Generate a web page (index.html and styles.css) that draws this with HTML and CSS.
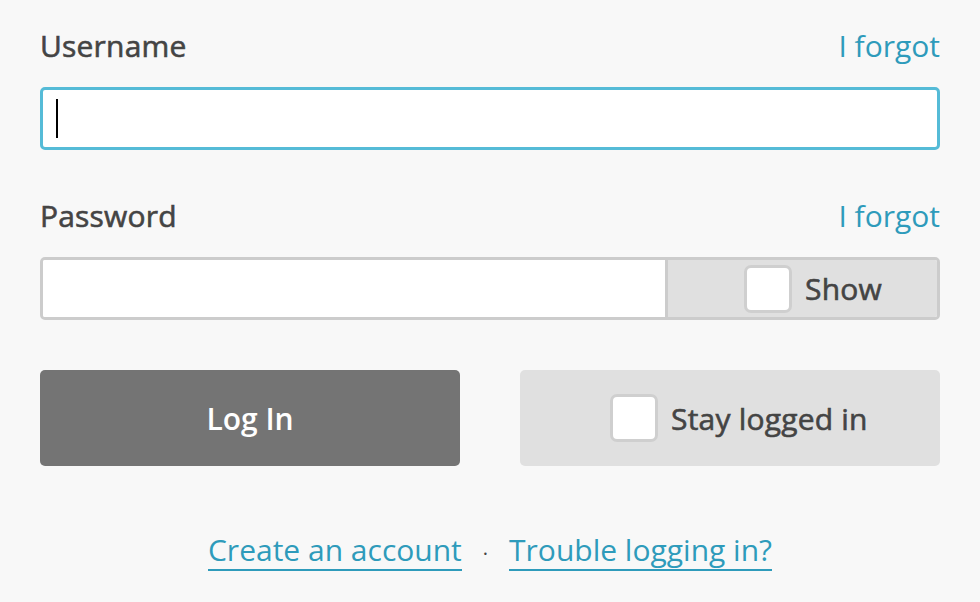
FILE: index.html
```html
<!DOCTYPE html>
<html lang="en">
<head>
<meta charset="utf-8">
<title>Log In</title>
<link rel="stylesheet" href="styles.css">
</head>
<body>
<form class="login">
  <div class="field">
    <div class="label-row">
      <label class="label">Username</label>
      <a class="forgot" href="#">I forgot</a>
    </div>
    <div class="input input-focus"><span class="caret"></span></div>
  </div>
  <div class="field">
    <div class="label-row">
      <label class="label">Password</label>
      <a class="forgot" href="#">I forgot</a>
    </div>
    <div class="input input-pass">
      <div class="pass-area"></div>
      <div class="show">
        <span class="check"></span>
        <span class="show-text">Show</span>
      </div>
    </div>
  </div>
  <div class="actions">
    <button type="button" class="btn-login">Log In</button>
    <div class="stay">
      <span class="check"></span>
      <span class="stay-text">Stay logged in</span>
    </div>
  </div>
  <div class="links">
    <a class="link" href="#">Create an account</a>
    <span class="dot">·</span>
    <a class="link" href="#">Trouble logging in?</a>
  </div>
</form>
</body>
</html>
```
FILE: styles.css
```css
html, body {
  margin: 0;
  padding: 0;
  background: #f8f8f8;
}
body {
  font-family: "Open Sans", "Noto Sans", sans-serif;
  color: #444;
}
.login {
  width: 900px;
  padding: 22px 40px 0;
}
.label-row {
  display: flex;
  justify-content: space-between;
  align-items: baseline;
  height: 48px;
}
.label,
.show-text,
.stay-text {
  font-size: 30px;
  font-weight: 400;
  color: #444;
  -webkit-text-stroke: 0.6px #444;
  letter-spacing: 0.2px;
}
.label {
  line-height: 48px;
}
.forgot {
  font-size: 30px;
  color: #2e9bbb;
  text-decoration: none;
  line-height: 48px;
}
.input {
  box-sizing: border-box;
  height: 63px;
  border: 3px solid #cccccc;
  border-radius: 5px;
  background: #fff;
  margin-top: 17px;
}
.input-focus {
  border-color: #55bbd7;
  display: flex;
  align-items: center;
  padding-left: 13px;
  margin-bottom: 42px;
}
.caret {
  display: block;
  width: 2px;
  height: 39px;
  background: #000;
}
.input-pass {
  display: flex;
  overflow: hidden;
}
.pass-area {
  flex: 1;
  background: #fff;
}
.show {
  width: 272px;
  box-sizing: border-box;
  border-left: 3px solid #cccccc;
  background: #e0e0e0;
  display: flex;
  align-items: center;
  padding-left: 76px;
}
.check {
  display: block;
  box-sizing: border-box;
  width: 48px;
  height: 48px;
  border: 3px solid #cfcfcf;
  border-radius: 7px;
  background: #fff;
  flex: none;
}
.show-text {
  margin-left: 13px;
}
.actions {
  display: flex;
  gap: 60px;
  margin-top: 50px;
}
.btn-login {
  width: 420px;
  height: 96px;
  border: none;
  border-radius: 5px;
  background: #747474;
  color: #fff;
  font-family: inherit;
  font-size: 30px;
  font-weight: 600;
  padding: 0;
}
.stay {
  width: 420px;
  height: 96px;
  box-sizing: border-box;
  border-radius: 5px;
  background: #e0e0e0;
  display: flex;
  align-items: center;
  padding-left: 90px;
}
.stay-text {
  margin-left: 13px;
}
.links {
  display: flex;
  justify-content: center;
  align-items: baseline;
  margin-top: 65px;
  font-size: 30px;
}
.link {
  color: #2e9bbb;
  text-decoration: none;
  border-bottom: 2px solid #2e9bbb;
  line-height: 38px;
}
.dot {
  color: #444;
  margin: 0 21px;
  font-size: 20px;
}
```
